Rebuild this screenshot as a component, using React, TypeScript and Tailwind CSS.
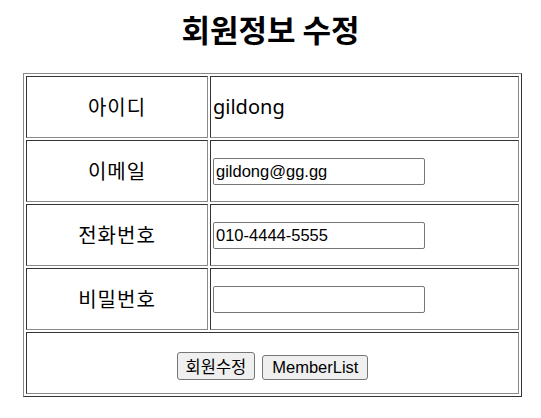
const KR = "font-['Noto_Sans_CJK_KR',sans-serif]";
const ARIAL = "font-['Liberation_Sans','Noto_Sans_CJK_KR',sans-serif]";

const labelCell =
  "h-[62px] w-[182px] border border-t-[#333333] border-l-[#333333] border-r-[#8a8a8a] border-b-[#8a8a8a] p-0 text-center align-middle text-[20px] tracking-[1px] text-black " +
  KR;
const valueCell =
  "h-[62px] border border-t-[#333333] border-l-[#333333] border-r-[#8a8a8a] border-b-[#8a8a8a] pl-[2px] align-middle text-black";

function Field({ value, type = "text" }: { value?: string; type?: string }) {
  return (
    <input
      type={type}
      defaultValue={value}
      className={`block h-[27px] w-[212px] rounded-[2px] border border-[#767676] bg-white px-[2px] text-[16.5px] leading-[19px] text-black outline-none ${ARIAL}`}
    />
  );
}

export default function App() {
  return (
    <div className="min-h-[418px] w-[541px] bg-white">
      <h1 className={`mt-[9px] text-center text-[31px] font-bold leading-[40px] text-black ${KR}`}>
        회원정보 수정
      </h1>
      <table className="ml-[23px] mt-[24px] w-[499px] border-separate border-spacing-[2px] border border-t-[#8a8a8a] border-l-[#8a8a8a] border-r-[#333333] border-b-[#333333]">
        <tbody>
          <tr>
            <td className={labelCell}>아이디</td>
            <td className={`${valueCell} text-[20px] font-['Noto_Sans',sans-serif]`}>gildong</td>
          </tr>
          <tr>
            <td className={labelCell}>이메일</td>
            <td className={valueCell}>
              <Field value="gildong@gg.gg" />
            </td>
          </tr>
          <tr>
            <td className={labelCell}>전화번호</td>
            <td className={valueCell}>
              <Field value="010-4444-5555" />
            </td>
          </tr>
          <tr>
            <td className={labelCell}>비밀번호</td>
            <td className={valueCell}>
              <Field type="password" />
            </td>
          </tr>
          <tr>
            <td
              colSpan={2}
              className="h-[62px] border border-t-[#333333] border-l-[#333333] border-r-[#8a8a8a] border-b-[#8a8a8a] align-middle"
            >
              <div className="flex items-end justify-center gap-[7px] pt-[6px]">
                <button
                  className={`h-[28px] rounded-[3px] border border-[#767676] bg-[#efefef] px-[8px] text-[16.5px] leading-[24px] text-black ${KR}`}
                >
                  회원수정
                </button>
                <button
                  className={`h-[25px] rounded-[3px] border border-[#767676] bg-[#efefef] px-[9px] text-[16.5px] leading-[21px] text-black ${ARIAL}`}
                >
                  MemberList
                </button>
              </div>
            </td>
          </tr>
        </tbody>
      </table>
    </div>
  );
}
